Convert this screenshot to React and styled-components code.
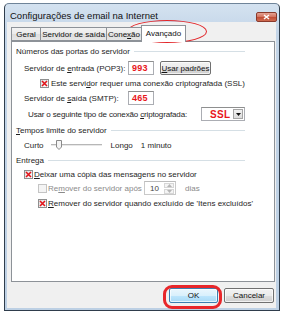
import React from 'react';
import styled, { createGlobalStyle } from 'styled-components';

const GlobalStyle = createGlobalStyle`
  html, body {
    margin: 0;
    padding: 0;
    background: #fff;
  }
  body {
    font-family: 'Liberation Sans', Arial, sans-serif;
    font-size: 8px;
    color: #1e1e1e;
  }
`;

const Page = styled.div`
  position: relative;
  width: 286px;
  height: 311px;
  overflow: hidden;
  padding: 3px 0 0 4px;
  box-sizing: border-box;
`;

const Window = styled.div`
  width: 276px;
  height: 308px;
  box-sizing: border-box;
  border: 1px solid #2f3d4c;
  border-top-color: #6f8499;
  border-radius: 5px 5px 0 0;
  background: linear-gradient(#d4e2f0, #c3d5e8 30px, #bdd0e4);
  display: flex;
  flex-direction: column;
`;

const TitleBar = styled.div`
  height: 18px;
  flex: none;
  display: flex;
  align-items: center;
  padding: 0 2px 0 5px;
`;

const Title = styled.div`
  flex: 1;
  font-size: 9.5px;
  color: #111;
  padding-top: 4px;
`;

const CloseButton = styled.div`
  width: 21px;
  height: 10px;
  margin-top: 8px;
  box-sizing: border-box;
  border: 1px solid #8a3a2c;
  border-radius: 2px;
  background: linear-gradient(#e5a293, #d2705c 50%, #c04a33 51%, #cf6b50);
  display: flex;
  align-items: center;
  justify-content: center;
`;

const Body = styled.div`
  flex: 1;
  display: flex;
  padding: 0 3px 2px 2px;
`;

const Client = styled.div`
  flex: 1;
  background: #f0f0f0;
  display: flex;
  flex-direction: column;
  padding: 3px 1px 0 4px;
`;

const TabRow = styled.div`
  height: 16px;
  display: flex;
  align-items: flex-end;
  position: relative;
  z-index: 1;
`;

const Tab = styled.div`
  width: ${(p) => p.$w}px;
  height: ${(p) => (p.$active ? 17 : 14)}px;
  margin-bottom: ${(p) => (p.$active ? -1 : 0)}px;
  box-sizing: border-box;
  border: 1px solid #8d9298;
  border-bottom: ${(p) => (p.$active ? 'none' : '1px solid #8d9298')};
  margin-left: ${(p) => (p.$first ? 0 : -1)}px;
  background: ${(p) =>
    p.$active ? '#fff' : 'linear-gradient(#f3f3f3, #ebebeb 50%, #dddddd 51%, #e6e6e6)'};
  display: flex;
  align-items: center;
  justify-content: center;
  padding-bottom: ${(p) => (p.$active ? 2 : 0)}px;
  color: #111;
`;

const Panel = styled.div`
  height: 241px;
  box-sizing: border-box;
  border: 1px solid #8d9298;
  background: #fff;
  padding: 2px 0 0 4px;
  display: flex;
  flex-direction: column;
`;

const Group = styled.div`
  width: 229px;
  display: flex;
  flex-direction: column;
`;

const Row = styled.div`
  height: 14px;
  margin-top: ${(p) => p.$mt || 0}px;
  padding-left: ${(p) => p.$indent || 0}px;
  display: flex;
  align-items: center;
  white-space: nowrap;
  letter-spacing: ${(p) => p.$tight || 0}px;
  color: ${(p) => (p.$muted ? '#8a8a8a' : '#1e1e1e')};
`;

const HeadLine = styled.div`
  flex: 1;
  height: 1px;
  margin-left: 4px;
  background: #d5dfe5;
  box-shadow: 0 1px 0 #fff;
`;

const Label = styled.div`
  width: ${(p) => p.$w}px;
  flex: none;
`;

const Field = styled.div`
  width: ${(p) => p.$w}px;
  height: 14px;
  flex: none;
  box-sizing: border-box;
  border: 1px solid ${(p) => (p.$muted ? '#c9c9c9' : '#abadb3')};
  border-top-color: ${(p) => (p.$muted ? '#bcbcbc' : '#8e8f8f')};
  background: #fff;
  display: flex;
  align-items: center;
  padding-left: ${(p) => p.$pad || 3}px;
  margin-left: ${(p) => (p.$auto ? 'auto' : '0')};
  position: relative;
  letter-spacing: 0;
`;

const RedValue = styled.span`
  color: #e8161b;
  font-weight: bold;
  font-size: ${(p) => p.$size || 9}px;
  letter-spacing: 0.3px;
`;

const Button = styled.div`
  width: ${(p) => p.$w}px;
  height: ${(p) => p.$h || 14}px;
  box-sizing: border-box;
  margin-left: ${(p) => p.$ml || 0}px;
  border: 1px solid ${(p) => (p.$default ? '#3c7fb1' : '#707070')};
  border-radius: 2px;
  background: ${(p) =>
    p.$default
      ? 'linear-gradient(#eaf6fd, #d9f0fc 50%, #bee6fd 51%, #a7d9f5)'
      : 'linear-gradient(#f2f2f2, #ebebeb 50%, #dddddd 51%, #cfcfcf)'};
  box-shadow: inset 0 0 0 1px rgba(255, 255, 255, 0.7);
  display: flex;
  align-items: center;
  justify-content: center;
  color: #111;
`;

const Check = styled.div`
  width: 9px;
  height: 9px;
  flex: none;
  box-sizing: border-box;
  border: 1px solid ${(p) => (p.$disabled ? '#c4c4c4' : '#8e8f8f')};
  background: ${(p) =>
    p.$disabled ? '#f4f4f4' : 'linear-gradient(135deg, #dcdcdc, #fdfdfd)'};
  margin-right: ${(p) => p.$mr || 1}px;
  display: flex;
  align-items: center;
  justify-content: center;
`;

const U = styled.span`
  text-decoration: underline;
  text-underline-offset: 1px;
`;

const Gap = styled.span`
  margin-left: ${(p) => p.$ml}px;
`;

const DropButton = styled.div`
  position: absolute;
  right: 1px;
  top: 1px;
  bottom: 1px;
  width: 10px;
  box-sizing: border-box;
  border: 1px solid #a5a5a5;
  background: linear-gradient(#f2f2f2, #dcdcdc);
  display: flex;
  align-items: center;
  justify-content: center;
`;

const SpinBox = styled.div`
  position: absolute;
  right: 1px;
  top: 1px;
  bottom: 1px;
  width: 10px;
  display: flex;
  flex-direction: column;
  gap: 1px;
`;

const SpinPart = styled.div`
  flex: 1;
  border: 1px solid #d6d6d6;
  background: #f4f4f4;
  display: flex;
  align-items: center;
  justify-content: center;
`;

const Slider = styled.div`
  width: 51px;
  height: 14px;
  margin-left: ${(p) => p.$ml}px;
  position: relative;
  display: flex;
  align-items: center;
`;

const Track = styled.div`
  flex: 1;
  height: 2px;
  box-sizing: border-box;
  border-top: 1px solid #b7b7b7;
  border-bottom: 1px solid #e8e8e8;
`;

const Thumb = styled.svg`
  position: absolute;
  left: 5px;
  top: 2px;
`;

const Footer = styled.div`
  display: flex;
  justify-content: flex-end;
  gap: 6px;
  padding: 6px 1px 0 0;
`;

const Ellipse = styled.div`
  position: absolute;
  left: 127px;
  top: 20px;
  width: 80px;
  height: 23px;
  box-sizing: border-box;
  border: 1.5px solid #e2262a;
  border-radius: 50%;
  pointer-events: none;
`;

const Highlight = styled.div`
  position: absolute;
  left: 163px;
  top: 285px;
  width: 59px;
  height: 24px;
  box-sizing: border-box;
  border: 3px solid #e8262a;
  border-radius: 9px;
  pointer-events: none;
`;

const XMark = () => (
  <svg width="7" height="7" viewBox="0 0 7 7">
    <path d="M1 1 L6 6 M6 1 L1 6" stroke="#e3141a" strokeWidth="1.6" />
  </svg>
);

const Heading = ({ children, mt }) => (
  <Row $mt={mt}>
    {children}
    <HeadLine />
  </Row>
);

const App = () => (
  <Page>
    <GlobalStyle />
    <Window>
      <TitleBar>
        <Title>Configurações de email na Internet</Title>
        <CloseButton>
          <svg width="7" height="6" viewBox="0 0 7 6">
            <path d="M1 1 L6 5 M6 1 L1 5" stroke="#fff" strokeWidth="1.5" />
          </svg>
        </CloseButton>
      </TitleBar>
      <Body>
        <Client>
          <TabRow>
            <Tab $w={30} $first>Geral</Tab>
            <Tab $w={67}>Servidor de saída</Tab>
            <Tab $w={36}>Cone<U>x</U>ão</Tab>
            <Tab $w={45} $active>Avançado</Tab>
          </TabRow>
          <Panel>
            <Group>
              <Heading>Números das portas do servidor</Heading>
              <Row $mt={3} $indent={8}>
                <Label $w={104}>Servidor de <U>e</U>ntrada (POP3):</Label>
                <Field $w={26}><RedValue>993</RedValue></Field>
                <Button $w={51} $ml={6}><span><U>U</U>sar padrões</span></Button>
              </Row>
              <Row $mt={1} $indent={24}>
                <Check $mr={2}><XMark /></Check>
                <span>Este servi<U>d</U>or requer uma conexão criptografada (SSL)</span>
              </Row>
              <Row $mt={1} $indent={8}>
                <Label $w={104}>Servidor de <U>s</U>aída (SMTP):</Label>
                <Field $w={26}><RedValue>465</RedValue></Field>
              </Row>
              <Row $mt={2} $indent={12} $tight={-0.15}>
                <span>Usar o seguinte tipo de conexão <U>c</U>riptografada:</span>
                <Field $w={44} $pad={8} $auto>
                  <RedValue $size={10}>SSL</RedValue>
                  <DropButton>
                    <svg width="5" height="3" viewBox="0 0 5 3">
                      <path d="M0 0 H5 L2.5 3 Z" fill="#111" />
                    </svg>
                  </DropButton>
                </Field>
              </Row>
              <Heading mt={2}><span><U>T</U>empos limite do servidor</span></Heading>
              <Row $mt={1} $indent={8}>
                <span>Curto</span>
                <Slider $ml={7}>
                  <Track />
                  <Thumb width="6" height="10" viewBox="0 0 6 10">
                    <path d="M0.5 0.5 V7 L3 9.5 L5.5 7 V0.5 Z" fill="#f4f4f4" stroke="#8a8a8a" />
                  </Thumb>
                </Slider>
                <Gap $ml={9}>Longo</Gap>
                <Gap $ml={8}>1 minuto</Gap>
              </Row>
              <Heading mt={1}>Entrega</Heading>
              <Row $indent={8}>
                <Check><XMark /></Check>
                <span><U>D</U>eixar uma cópia das mensagens no servidor</span>
              </Row>
              <Row $indent={22} $muted>
                <Check $disabled />
                <Label $w={96}>Re<U>m</U>over do servidor após</Label>
                <Field $w={32} $muted $pad={5}>
                  <span style={{ color: '#444' }}>10</span>
                  <SpinBox>
                    <SpinPart>
                      <svg width="5" height="3" viewBox="0 0 5 3">
                        <path d="M0 3 H5 L2.5 0 Z" fill="#b5b5b5" />
                      </svg>
                    </SpinPart>
                    <SpinPart>
                      <svg width="5" height="3" viewBox="0 0 5 3">
                        <path d="M0 0 H5 L2.5 3 Z" fill="#b5b5b5" />
                      </svg>
                    </SpinPart>
                  </SpinBox>
                </Field>
                <Gap $ml={9}>dias</Gap>
              </Row>
              <Row $mt={1} $indent={22}>
                <Check><XMark /></Check>
                <span><U>R</U>emover do servidor quando excluído de 'Itens excluídos'</span>
              </Row>
            </Group>
          </Panel>
          <Footer>
            <Button $w={49} $h={15} $default>OK</Button>
            <Button $w={50} $h={15}>Cancelar</Button>
          </Footer>
        </Client>
      </Body>
    </Window>
    <Ellipse />
    <Highlight />
  </Page>
);

export default App;
